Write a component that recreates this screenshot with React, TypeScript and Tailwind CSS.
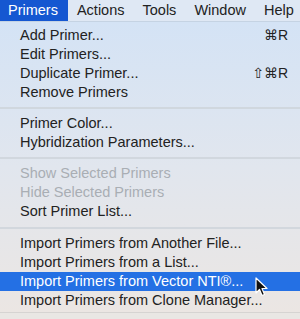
import React from 'react'

type Item = { label: string; shortcut?: string; disabled?: boolean; active?: boolean }

const groups: Item[][] = [
    [
        { label: 'Add Primer...', shortcut: '⌘R' },
        { label: 'Edit Primers...' },
        { label: 'Duplicate Primer...', shortcut: '⇧⌘R' },
        { label: 'Remove Primers' },
    ],
    [
        { label: 'Primer Color...' },
        { label: 'Hybridization Parameters...' },
    ],
    [
        { label: 'Show Selected Primers', disabled: true },
        { label: 'Hide Selected Primers', disabled: true },
        { label: 'Sort Primer List...' },
    ],
    [
        { label: 'Import Primers from Another File...' },
        { label: 'Import Primers from a List...' },
        { label: 'Import Primers from Vector NTI®...', active: true },
        { label: 'Import Primers from Clone Manager...' },
    ],
]

const menus = ['Primers', 'Actions', 'Tools', 'Window', 'Help']

function Cursor() {
    return (
        <svg width="14" height="21" viewBox="0 0 14 21" className="absolute left-[255px] top-[277px]">
            <path d="M1 1 L1 16 L4.5 12.5 L7 18.5 L9.5 17.5 L7 11.5 L12 11.5 Z" fill="#111" stroke="#fff" strokeWidth="1.2" strokeLinejoin="round" />
        </svg>
    )
}

export default function App() {
    return (
        <div className="relative w-[300px] h-[319px] overflow-hidden bg-[#e9e7e4] font-['Liberation_Sans','DejaVu_Sans',sans-serif] text-[#222]">
            <div className="flex h-[22px] items-center bg-[#dfe8f4] border-b border-[#c5d3e3] text-[14.5px] whitespace-nowrap">
                {menus.map((m, i) => (
                    <div
                        key={m}
                        className={`h-full flex items-center ${i === 0 ? 'pl-2 pr-[10px] bg-[#1557d1] text-white' : 'px-[9px]'}`}
                    >
                        {m}
                    </div>
                ))}
            </div>

            <div className="h-[291px] pt-[4px] bg-gradient-to-b from-[#d4e3f5] via-[#e1e6ee] to-[#ebe6e3] border-b border-[#d6d4d2] text-[14.5px] whitespace-nowrap">
                {groups.map((g, gi) => (
                    <div key={gi}>
                        {gi > 0 && (
                            <div className={`${gi === 3 ? 'h-[13px]' : 'h-[12px]'} flex items-center`}>
                                <div className="w-full h-[2px] bg-[#cdd3da]/80" />
                            </div>
                        )}
                        {g.map((it) => (
                            <div
                                key={it.label}
                                className={`h-[19px] flex items-center justify-between pl-5 pr-3 ${it.active ? 'bg-[#2470e4] text-white' : ''} ${it.disabled ? 'text-[#a9aeb4]' : ''}`}
                            >
                                <span>{it.label}</span>
                                {it.shortcut && <span className="text-[14px]">{it.shortcut}</span>}
                            </div>
                        ))}
                    </div>
                ))}
            </div>

            <Cursor />
        </div>
    )
}
